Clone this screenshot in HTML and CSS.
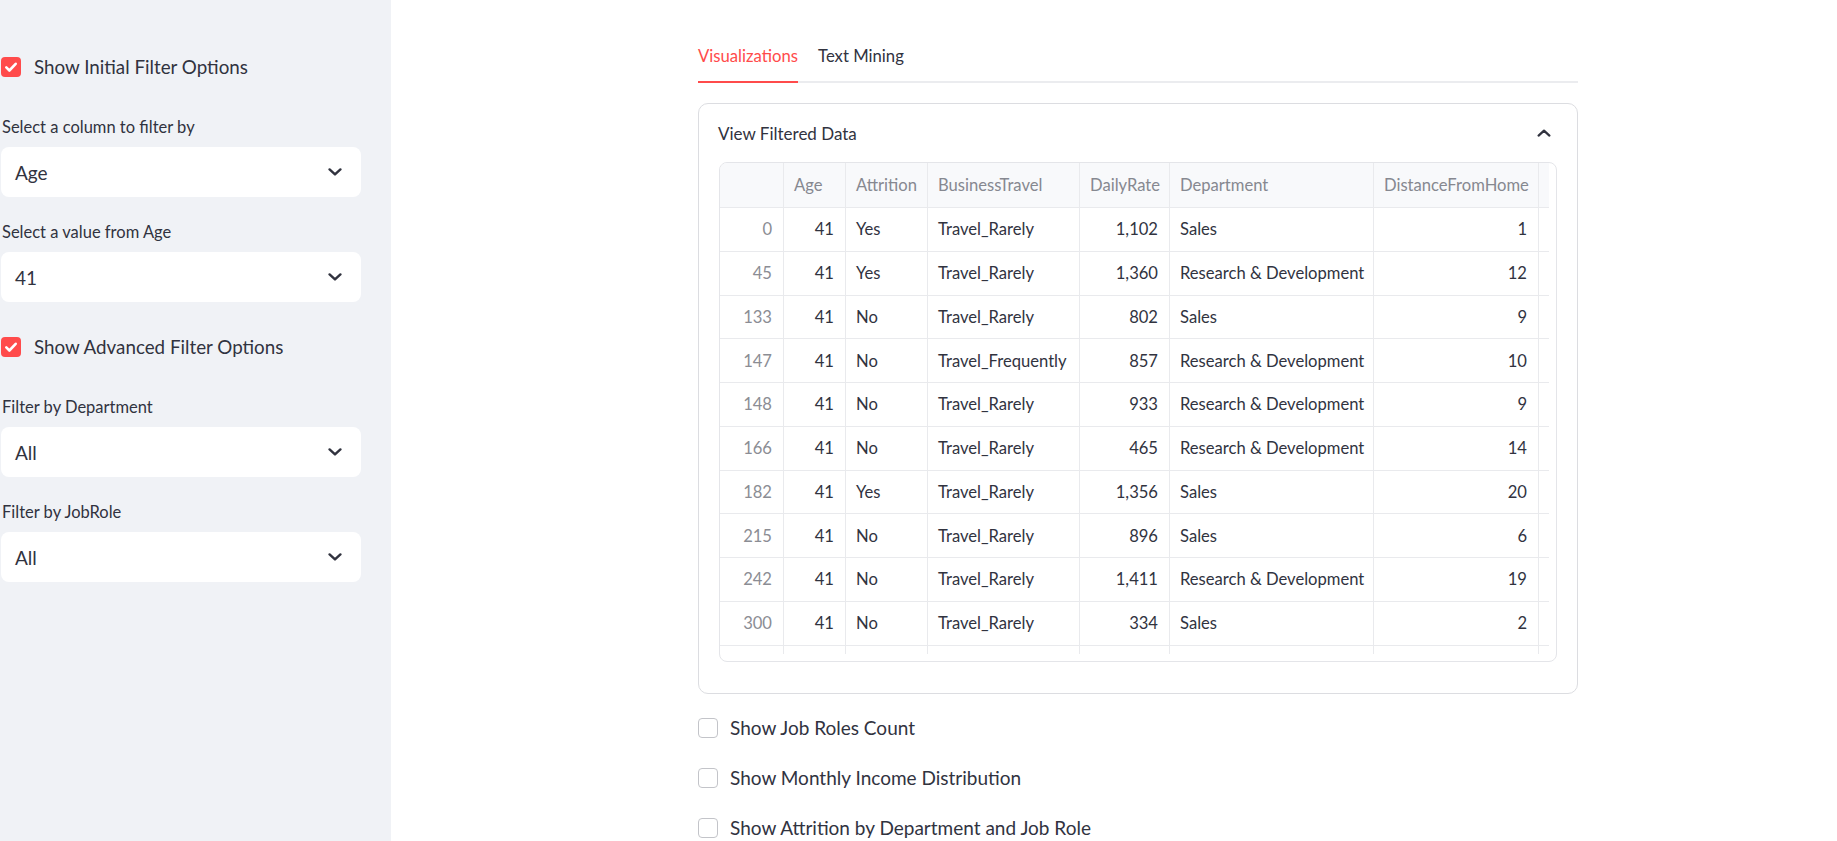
FILE: index.html
```html
<!DOCTYPE html>
<html lang="en">
<head>
<meta charset="utf-8">
<title>Dashboard</title>
<link rel="stylesheet" href="styles.css">
</head>
<body>
<aside class="sidebar">
  <div class="sb-inner">
    <label class="check check-first">
      <span class="box box-on"><svg viewBox="0 0 20 20" width="20" height="20"><path d="M5.3 10.4l3.1 3.1 6.3-6.7" fill="none" stroke="#fff" stroke-width="2.6" stroke-linecap="round" stroke-linejoin="round"/></svg></span>
      <span class="check-text">Show Initial Filter Options</span>
    </label>
    <div class="field field-first-after-check">
      <div class="field-label">Select a column to filter by</div>
      <div class="select"><span>Age</span><svg class="chev" viewBox="0 0 14 8" width="14" height="8"><path d="M1.6 1.4L7 6.4l5.4-5" fill="none" stroke="#31333f" stroke-width="2.4" stroke-linecap="round" stroke-linejoin="round"/></svg></div>
    </div>
    <div class="field">
      <div class="field-label">Select a value from Age</div>
      <div class="select"><span>41</span><svg class="chev" viewBox="0 0 14 8" width="14" height="8"><path d="M1.6 1.4L7 6.4l5.4-5" fill="none" stroke="#31333f" stroke-width="2.4" stroke-linecap="round" stroke-linejoin="round"/></svg></div>
    </div>
    <label class="check check-second">
      <span class="box box-on"><svg viewBox="0 0 20 20" width="20" height="20"><path d="M5.3 10.4l3.1 3.1 6.3-6.7" fill="none" stroke="#fff" stroke-width="2.6" stroke-linecap="round" stroke-linejoin="round"/></svg></span>
      <span class="check-text">Show Advanced Filter Options</span>
    </label>
    <div class="field field-first-after-check">
      <div class="field-label">Filter by Department</div>
      <div class="select"><span>All</span><svg class="chev" viewBox="0 0 14 8" width="14" height="8"><path d="M1.6 1.4L7 6.4l5.4-5" fill="none" stroke="#31333f" stroke-width="2.4" stroke-linecap="round" stroke-linejoin="round"/></svg></div>
    </div>
    <div class="field">
      <div class="field-label">Filter by JobRole</div>
      <div class="select"><span>All</span><svg class="chev" viewBox="0 0 14 8" width="14" height="8"><path d="M1.6 1.4L7 6.4l5.4-5" fill="none" stroke="#31333f" stroke-width="2.4" stroke-linecap="round" stroke-linejoin="round"/></svg></div>
    </div>
  </div>
</aside>

<main class="main">
  <div class="content">
    <div class="tabs">
      <div class="tab tab-active">Visualizations</div>
      <div class="tab">Text Mining</div>
    </div>

    <section class="expander">
      <div class="exp-head">
        <span>View Filtered Data</span>
        <svg class="chev-up" viewBox="0 0 14 8" width="14" height="8"><path d="M1.6 6.6L7 1.6l5.4 5" fill="none" stroke="#31333f" stroke-width="2.2" stroke-linecap="round" stroke-linejoin="round"/></svg>
      </div>
      <div class="exp-body">
        <div class="frame">
          <div class="grid-view">
            <div class="grid">
              <div class="hc"></div><div class="hc">Age</div><div class="hc">Attrition</div><div class="hc">BusinessTravel</div><div class="hc">DailyRate</div><div class="hc">Department</div><div class="hc">DistanceFromHome</div><div class="hc"></div>

              <div class="c idx">0</div><div class="c num">41</div><div class="c">Yes</div><div class="c">Travel_Rarely</div><div class="c num">1,102</div><div class="c">Sales</div><div class="c num">1</div><div class="c"></div>
              <div class="c idx">45</div><div class="c num">41</div><div class="c">Yes</div><div class="c">Travel_Rarely</div><div class="c num">1,360</div><div class="c">Research &amp; Development</div><div class="c num">12</div><div class="c"></div>
              <div class="c idx">133</div><div class="c num">41</div><div class="c">No</div><div class="c">Travel_Rarely</div><div class="c num">802</div><div class="c">Sales</div><div class="c num">9</div><div class="c"></div>
              <div class="c idx">147</div><div class="c num">41</div><div class="c">No</div><div class="c">Travel_Frequently</div><div class="c num">857</div><div class="c">Research &amp; Development</div><div class="c num">10</div><div class="c"></div>
              <div class="c idx">148</div><div class="c num">41</div><div class="c">No</div><div class="c">Travel_Rarely</div><div class="c num">933</div><div class="c">Research &amp; Development</div><div class="c num">9</div><div class="c"></div>
              <div class="c idx">166</div><div class="c num">41</div><div class="c">No</div><div class="c">Travel_Rarely</div><div class="c num">465</div><div class="c">Research &amp; Development</div><div class="c num">14</div><div class="c"></div>
              <div class="c idx">182</div><div class="c num">41</div><div class="c">Yes</div><div class="c">Travel_Rarely</div><div class="c num">1,356</div><div class="c">Sales</div><div class="c num">20</div><div class="c"></div>
              <div class="c idx">215</div><div class="c num">41</div><div class="c">No</div><div class="c">Travel_Rarely</div><div class="c num">896</div><div class="c">Sales</div><div class="c num">6</div><div class="c"></div>
              <div class="c idx">242</div><div class="c num">41</div><div class="c">No</div><div class="c">Travel_Rarely</div><div class="c num">1,411</div><div class="c">Research &amp; Development</div><div class="c num">19</div><div class="c"></div>
              <div class="c idx">300</div><div class="c num">41</div><div class="c">No</div><div class="c">Travel_Rarely</div><div class="c num">334</div><div class="c">Sales</div><div class="c num">2</div><div class="c"></div>
              <div class="c idx"></div><div class="c"></div><div class="c"></div><div class="c"></div><div class="c"></div><div class="c"></div><div class="c"></div><div class="c"></div>
            </div>
          </div>
        </div>
      </div>
    </section>

    <div class="checks">
      <label class="check"><span class="box box-off"></span><span class="check-text">Show Job Roles Count</span></label>
      <label class="check"><span class="box box-off"></span><span class="check-text">Show Monthly Income Distribution</span></label>
      <label class="check"><span class="box box-off"></span><span class="check-text">Show Attrition by Department and Job Role</span></label>
    </div>
  </div>
</main>
</body>
</html>
```

FILE: styles.css
```css
* { box-sizing: border-box; }

html, body {
  margin: 0;
  padding: 0;
  height: 100%;
}

body {
  display: flex;
  font-family: "Lato", "Liberation Sans", sans-serif;
  color: #31333f;
  background: #ffffff;
  overflow: hidden;
}

/* Sidebar */
.sidebar {
  width: 391px;
  flex: 0 0 391px;
  height: 841px;
  background: #f0f2f6;
}

.sb-inner {
  width: 361px;
  padding-left: 1px;
  display: flex;
  flex-direction: column;
}

.check {
  display: flex;
  align-items: center;
  height: 24px;
  gap: 13px;
  font-size: 18.8px;
  line-height: 24px;
}

.check-first { margin-top: 55px; }
.check-second { margin-top: 33px; }

.box {
  width: 20px;
  height: 20px;
  flex: 0 0 20px;
  border-radius: 4px;
  display: flex;
  align-items: center;
  justify-content: center;
}

.box-on { background: #ff4b4b; }

.box-off {
  background: #ffffff;
  border: 1px solid #c3c4c9;
}

.field { margin-top: 24px; }
.field-first-after-check { margin-top: 37px; }

.field-label {
  font-size: 16.5px;
  line-height: 22px;
  height: 22px;
  margin-left: 1px;
  margin-bottom: 9px;
}

.select {
  height: 50px;
  width: 360px;
  background: #ffffff;
  border-radius: 8px;
  display: flex;
  align-items: center;
  justify-content: space-between;
  padding: 0 19px 0 14px;
  font-size: 19px;
}

.chev { display: block; }

/* Main */
.main {
  flex: 1;
  height: 841px;
  padding-left: 307px;
}

.content {
  width: 880px;
  padding-top: 44px;
}

.tabs {
  display: flex;
  gap: 20px;
  border-bottom: 2px solid #ebecef;
}

.tab {
  font-size: 16.7px;
  line-height: 24px;
  padding-bottom: 13px;
  margin-bottom: -2px;
  border-bottom: 2px solid transparent;
}

.tab-active {
  color: #ff4b4b;
  border-bottom-color: #ff4b4b;
}

.expander {
  margin-top: 20px;
  border: 1px solid #dcdde1;
  border-radius: 10px;
}

.exp-head {
  height: 58px;
  display: flex;
  align-items: center;
  justify-content: space-between;
  padding: 0 26px 0 19px;
  font-size: 17px;
}

.chev-up { display: block; }

.exp-body {
  padding: 0 20px 31px 20px;
}

.frame {
  width: 838px;
  height: 500px;
  border: 1px solid #e4e5e9;
  border-radius: 8px;
  overflow: hidden;
  background: #ffffff;
}

.grid-view {
  width: 829px;
  height: 491px;
  overflow: hidden;
}

.grid {
  display: grid;
  grid-template-columns: 64px 62px 82px 152px 90px 204px 165px 80px;
  grid-template-rows: 45px;
  grid-auto-rows: 43.75px;
  width: 899px;
  font-size: 16.6px;
}

.hc, .c {
  border-right: 1px solid #e9eaed;
  border-bottom: 1px solid #e9eaed;
  padding: 0 10px;
  display: flex;
  align-items: center;
  white-space: nowrap;
  overflow: hidden;
}

.hc {
  background: #f8f9fb;
  color: #868890;
}

.c { color: #31333f; }

.num { justify-content: flex-end; padding-right: 11px; }

.idx {
  justify-content: flex-end;
  padding-right: 11px;
  color: #8b8d94;
}

.checks {
  margin-top: 22px;
  display: flex;
  flex-direction: column;
  gap: 26px;
}

.checks .check {
  gap: 12px;
  font-size: 19px;
}
```
